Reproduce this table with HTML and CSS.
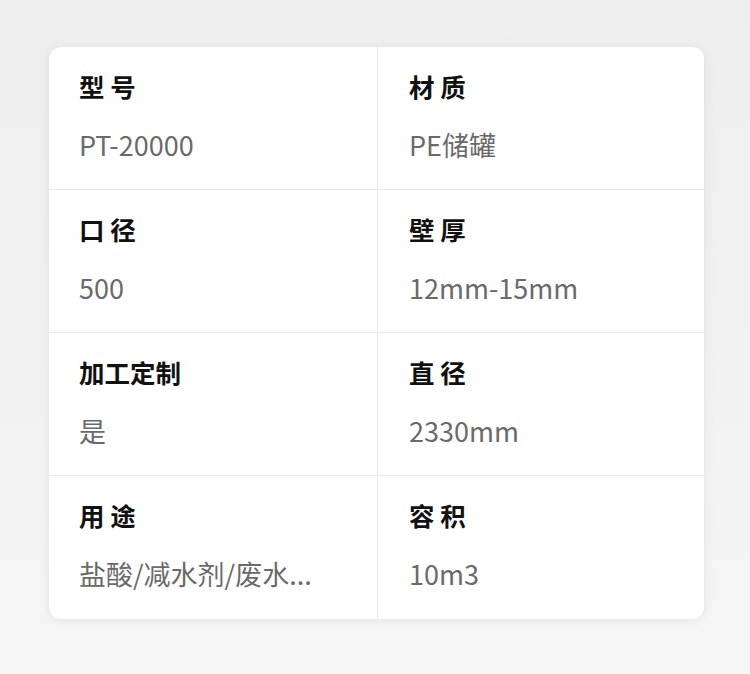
FILE: index.html
```html
<!DOCTYPE html>
<html lang="zh-CN">
<head>
<meta charset="utf-8">
<title>参数</title>
<link rel="stylesheet" href="styles.css">
</head>
<body>
<div class="page">
  <div class="card">
    <div class="cell"><div class="label">型 号</div><div class="value">PT-20000</div></div>
    <div class="cell right"><div class="label">材 质</div><div class="value">PE储罐</div></div>
    <div class="cell"><div class="label">口 径</div><div class="value">500</div></div>
    <div class="cell right"><div class="label">壁 厚</div><div class="value">12mm-15mm</div></div>
    <div class="cell"><div class="label">加工定制</div><div class="value">是</div></div>
    <div class="cell right"><div class="label">直 径</div><div class="value">2330mm</div></div>
    <div class="cell last"><div class="label">用 途</div><div class="value">盐酸/减水剂/废水...</div></div>
    <div class="cell right last"><div class="label">容 积</div><div class="value">10m3</div></div>
  </div>
</div>
</body>
</html>
```
FILE: styles.css
```css
html, body {
  margin: 0;
  padding: 0;
}
body {
  width: 750px;
  height: 674px;
  overflow: hidden;
  background: linear-gradient(180deg, #eeeeee 0%, #f2f2f2 60%, #f6f6f6 100%);
  font-family: "Noto Sans CJK SC", "Noto Sans", sans-serif;
}
.page {
  padding: 47px 46px 0 49px;
}
.card {
  width: 655px;
  background: #ffffff;
  border-radius: 12px;
  box-shadow: 0 1px 12px rgba(0, 0, 0, 0.07);
  display: grid;
  grid-template-columns: 328px 327px;
  grid-auto-rows: 143px;
  overflow: hidden;
}
.cell {
  box-sizing: border-box;
  border-bottom: 1px solid #e9e9e9;
  padding: 24px 30px 0 30px;
  display: flex;
  flex-direction: column;
}
.cell.right {
  border-left: 1px solid #e9e9e9;
  padding-left: 31px;
}
.cell.last {
  border-bottom: none;
}
.label {
  font-size: 25.5px;
  line-height: 30px;
  font-weight: 700;
  color: #111111;
}
.value {
  margin-top: 27px;
  font-size: 27px;
  line-height: 34px;
  font-weight: 400;
  color: #6a6a6a;
}
```
